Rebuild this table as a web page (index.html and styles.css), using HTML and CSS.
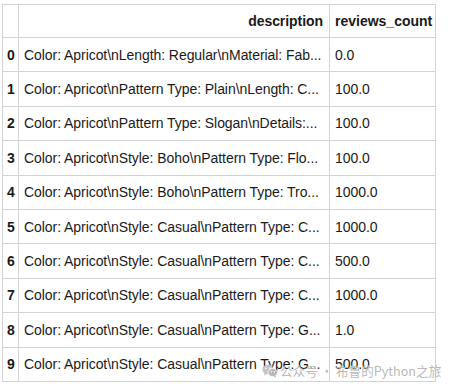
FILE: index.html
```html
<!DOCTYPE html>
<html>
<head>
<meta charset="utf-8">
<link rel="stylesheet" href="styles.css">
</head>
<body>
<div class="wrap">
<table class="df">
  <colgroup><col class="c-idx"><col class="c-desc"><col class="c-rc"></colgroup>
  <thead>
    <tr class="head"><th class="idx"></th><th class="desc-h">description</th><th class="rc-h">reviews_count</th></tr>
  </thead>
  <tbody>
    <tr><th class="idx">0</th><td>Color: Apricot\nLength: Regular\nMaterial: Fab...</td><td>0.0</td></tr>
    <tr><th class="idx">1</th><td>Color: Apricot\nPattern Type: Plain\nLength: C...</td><td>100.0</td></tr>
    <tr><th class="idx">2</th><td>Color: Apricot\nPattern Type: Slogan\nDetails:...</td><td>100.0</td></tr>
    <tr><th class="idx">3</th><td>Color: Apricot\nStyle: Boho\nPattern Type: Flo...</td><td>100.0</td></tr>
    <tr><th class="idx">4</th><td>Color: Apricot\nStyle: Boho\nPattern Type: Tro...</td><td>1000.0</td></tr>
    <tr><th class="idx">5</th><td>Color: Apricot\nStyle: Casual\nPattern Type: C...</td><td>1000.0</td></tr>
    <tr><th class="idx">6</th><td>Color: Apricot\nStyle: Casual\nPattern Type: C...</td><td>500.0</td></tr>
    <tr><th class="idx">7</th><td>Color: Apricot\nStyle: Casual\nPattern Type: C...</td><td>1000.0</td></tr>
    <tr><th class="idx">8</th><td>Color: Apricot\nStyle: Casual\nPattern Type: G...</td><td>1.0</td></tr>
    <tr><th class="idx">9</th><td>Color: Apricot\nStyle: Casual\nPattern Type: G...</td><td>500.0</td></tr>
  </tbody>
</table>
<div class="wm">
  <svg class="wm-icon" width="16" height="14" viewBox="0 0 16 14">
    <ellipse cx="6" cy="5.5" rx="5.6" ry="4.8" fill="#c4c4c4"/>
    <path d="M2.5 9 L2 11.5 L5 10 Z" fill="#c4c4c4"/>
    <ellipse cx="10.8" cy="8.6" rx="4.8" ry="4" fill="#b9b9b9" stroke="#fff" stroke-width="0.8"/>
    <path d="M13.5 11.6 L14.2 13.6 L11.6 12.4 Z" fill="#b9b9b9"/>
    <circle cx="4" cy="4.4" r="0.8" fill="#fff"/>
    <circle cx="8" cy="4.4" r="0.8" fill="#fff"/>
    <circle cx="9.3" cy="7.8" r="0.7" fill="#fff"/>
    <circle cx="12.4" cy="7.8" r="0.7" fill="#fff"/>
  </svg>
  <span class="wm-text">公众号 · 布鲁的Python之旅</span>
</div>
</div>
</body>
</html>
```
FILE: styles.css
```css
html, body {
  margin: 0;
  padding: 0;
  background: #fff;
}
.wrap {
  position: relative;
  padding: 4px 0 0 2px;
}
.df {
  border-collapse: collapse;
  table-layout: fixed;
  width: 433px;
  font-family: "Liberation Sans", Arial, sans-serif;
  font-size: 14px;
  letter-spacing: -0.06px;
  color: #1a1a1a;
}
.c-idx { width: 16px; }
.c-desc { width: 311px; }
.c-rc { width: 106px; }
.df th, .df td {
  border: 1px solid #d2d2d2;
  padding: 0 4px 0 5px;
  white-space: nowrap;
  overflow: hidden;
  text-align: left;
  font-weight: normal;
}
.df tr.head th {
  height: 32px;
  font-weight: bold;
  text-align: right;
}
.df tbody th, .df tbody td {
  height: 33.4px;
}
.df th.idx {
  padding: 0 4px;
  font-weight: bold;
}
.df .desc-h {
  padding-right: 6px;
}
.df .rc-h {
  padding-right: 4px;
  letter-spacing: 0;
}
.wm {
  position: absolute;
  left: 262px;
  top: 363px;
  display: flex;
  align-items: center;
  gap: 2px;
}
.wm-icon {
  display: block;
}
.wm-text {
  font-family: "Noto Sans CJK SC", "Noto Sans", sans-serif;
  font-size: 12.6px;
  line-height: 16px;
  color: rgba(170, 170, 170, 0.85);
  text-shadow: 0 0 1px #fff;
}
```
